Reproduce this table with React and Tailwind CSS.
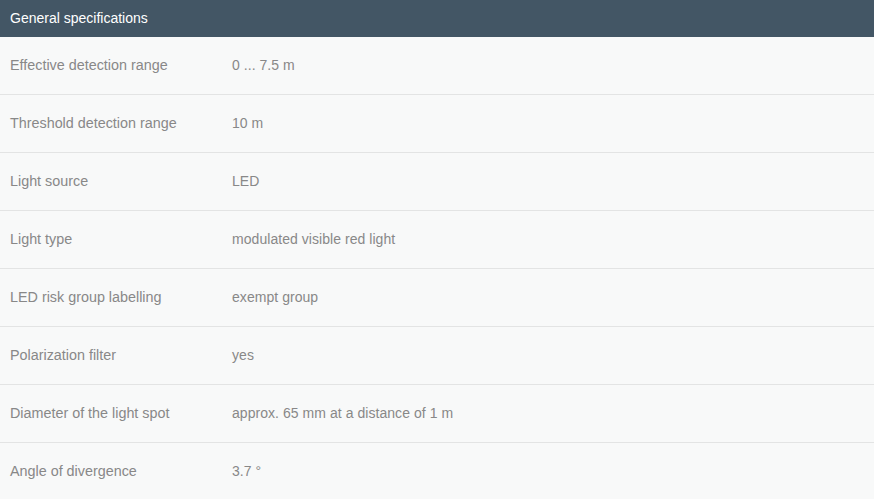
const SPECS = [
  ["Effective detection range", "0 ... 7.5 m"],
  ["Threshold detection range", "10 m"],
  ["Light source", "LED"],
  ["Light type", "modulated visible red light"],
  ["LED risk group labelling", "exempt group"],
  ["Polarization filter", "yes"],
  ["Diameter of the light spot", "approx. 65 mm at a distance of 1 m"],
  ["Angle of divergence", "3.7 °"],
];

export default function App() {
  return (
    <div className="w-[874px] h-[499px] overflow-hidden bg-[#f8f9f9] font-['Liberation_Sans',Arial,sans-serif] text-[14px]">
      {/* Header */}
      <div className="h-[37px] bg-[#435665] text-white flex items-center px-[10px]">
        General specifications
      </div>

      {/* Rows */}
      {SPECS.map(([label, value], i) => (
        <div
          key={i}
          className={`flex items-center h-[58px] text-[#888888] ${
            i < SPECS.length - 1 ? "border-b border-[#e3e4e4]" : "pb-[1px]"
          }`}
        >
          <div className="w-[232px] pl-[10px] shrink-0 text-[14.35px]">{label}</div>
          <div className="tracking-[0.05px]">{value}</div>
        </div>
      ))}
    </div>
  );
}
